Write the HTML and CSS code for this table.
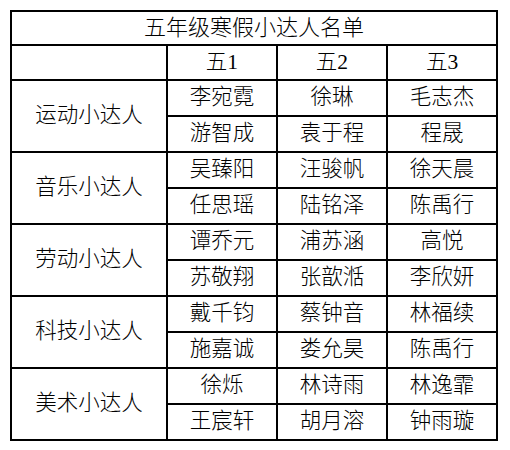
FILE: index.html
```html
<!DOCTYPE html>
<html lang="zh">
<head>
<meta charset="utf-8">
<link rel="stylesheet" href="styles.css">
</head>
<body>
<table class="roster">
  <colgroup>
    <col class="c-cat"><col class="c-n"><col class="c-n"><col class="c-n">
  </colgroup>
  <tr class="r-title"><td colspan="4">五年级寒假小达人名单</td></tr>
  <tr class="r-head"><td></td><td>五1</td><td>五2</td><td>五3</td></tr>
  <tr class="r-data"><td rowspan="2">运动小达人</td><td>李宛霓</td><td>徐琳</td><td>毛志杰</td></tr>
  <tr class="r-data"><td>游智成</td><td>袁于程</td><td>程晟</td></tr>
  <tr class="r-data"><td rowspan="2">音乐小达人</td><td>吴臻阳</td><td>汪骏帆</td><td>徐天晨</td></tr>
  <tr class="r-data"><td>任思瑶</td><td>陆铭泽</td><td>陈禹行</td></tr>
  <tr class="r-data"><td rowspan="2">劳动小达人</td><td>谭乔元</td><td>浦苏涵</td><td>高悦</td></tr>
  <tr class="r-data"><td>苏敬翔</td><td>张歆湉</td><td>李欣妍</td></tr>
  <tr class="r-data"><td rowspan="2">科技小达人</td><td>戴千钧</td><td>蔡钟音</td><td>林福续</td></tr>
  <tr class="r-data"><td>施嘉诚</td><td>娄允昊</td><td>陈禹行</td></tr>
  <tr class="r-data"><td rowspan="2">美术小达人</td><td>徐烁</td><td>林诗雨</td><td>林逸霏</td></tr>
  <tr class="r-data"><td>王宸轩</td><td>胡月溶</td><td>钟雨璇</td></tr>
</table>
</body>
</html>
```
FILE: styles.css
```css
html, body {
  margin: 0;
  padding: 0;
  background: #fff;
}
body {
  padding: 10px;
}
.roster {
  border-collapse: collapse;
  table-layout: fixed;
  width: 487px;
  font-family: "Liberation Serif", "Noto Sans CJK SC", serif;
  font-size: 21.5px;
  font-weight: 300;
  color: #000;
}
.roster td {
  border: 2px solid #000;
  text-align: center;
  vertical-align: middle;
  padding: 0;
  line-height: 1;
}
.c-cat { width: 156px; }
.c-n { width: 110px; }
.r-title { height: 34px; }
.r-title td { font-size: 22px; }
.r-head { height: 35px; }
.r-data { height: 36px; }
```
